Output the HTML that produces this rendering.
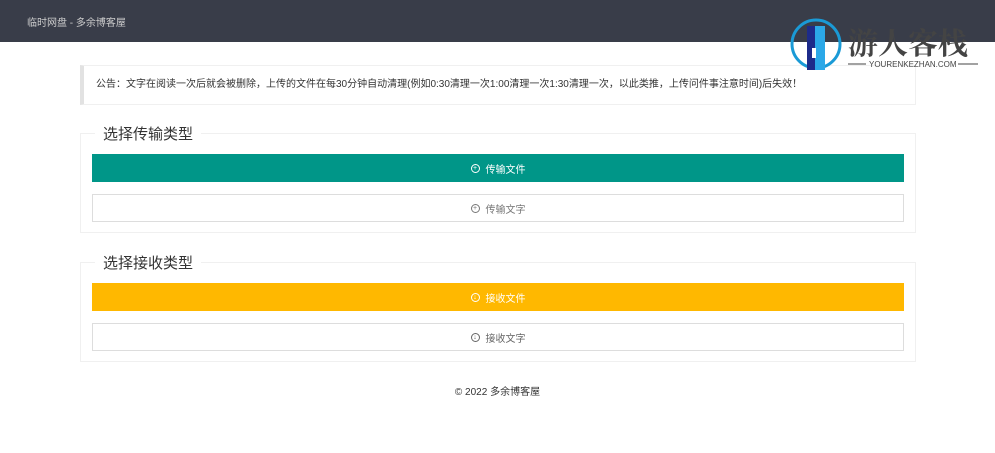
<!DOCTYPE html>
<html><head><meta charset="utf-8"><style>
*{margin:0;padding:0;box-sizing:border-box}
body{width:995px;height:453px;background:#fff;font-family:"Liberation Sans","Noto Sans CJK SC",sans-serif;position:relative;overflow:hidden;color:#333}
.hd{position:absolute;left:0;top:0;width:995px;height:42px;background:#393d49}
.hd span{position:absolute;left:27px;top:14px;font-size:10px;color:#ccc}
.notice{position:absolute;left:80px;top:65px;width:836px;height:40px;border:1px solid #f0f0f0;border-left:4px solid #e2e2e2;background:#fff;font-size:10px;line-height:38px;padding-left:12px;color:#333;white-space:nowrap}
.fs{position:absolute;left:80px;width:836px;height:100px;border:1px solid #f0f0f0}
.fs .lg{position:absolute;left:14px;top:-11px;background:#fff;padding:0 8px;font-size:15px;color:#333}
.btn{position:absolute;left:11px;width:812px;height:28px;font-size:10px;display:flex;align-items:center;justify-content:center}
.btn i{display:inline-block;width:9px;height:9px;border:1px solid currentColor;border-radius:50%;margin-right:6px;font-style:normal;font-size:7px;line-height:7px;text-align:center}
.g{background:#009688;color:#fff}
.y{background:#ffb800;color:#fff}
.w{background:#fff;border:1px solid #ddd;color:#666}
.ft{position:absolute;top:383px;width:995px;text-align:center;font-size:10px;color:#333}
.logo{position:absolute;left:790px;top:18px}
</style></head><body>
<div class="hd"><span>临时网盘 - 多余博客屋</span></div>
<div class="notice">公告：文字在阅读一次后就会被删除，上传的文件在每30分钟自动清理(例如0:30清理一次1:00清理一次1:30清理一次，以此类推，上传问件事注意时间)后失效！</div>
<div class="fs" style="top:133px"><span class="lg">选择传输类型</span>
<div class="btn g" style="top:20px"><i>+</i>传输文件</div>
<div class="btn w" style="top:60px;color:#777"><i>+</i>传输文字</div></div>
<div class="fs" style="top:262px"><span class="lg">选择接收类型</span>
<div class="btn y" style="top:20px"><i>↓</i>接收文件</div>
<div class="btn w" style="top:60px"><i>↓</i>接收文字</div></div>
<div class="ft">© 2022 多余博客屋</div>
<div class="logo">
<svg width="205" height="56" viewBox="0 0 205 56">
<circle cx="26" cy="26" r="24" fill="none" stroke="#1a9ad6" stroke-width="3"/>
<rect x="17" y="8" width="8" height="44" fill="#1d2b8a"/>
<rect x="25" y="8" width="10" height="44" fill="#2ba8e8"/>
<rect x="22" y="30" width="4" height="10" fill="#fff"/>
<text x="58" y="36" font-family="Noto Serif CJK SC,serif" font-weight="bold" font-size="30" fill="#444">游人客栈</text>
<line x1="58" y1="46" x2="76" y2="46" stroke="#444"/>
<text x="79" y="49" font-size="8" fill="#444" font-family="Liberation Sans">YOURENKEZHAN.COM</text>
<line x1="168" y1="46" x2="188" y2="46" stroke="#444"/>
</svg></div>
</body></html>
